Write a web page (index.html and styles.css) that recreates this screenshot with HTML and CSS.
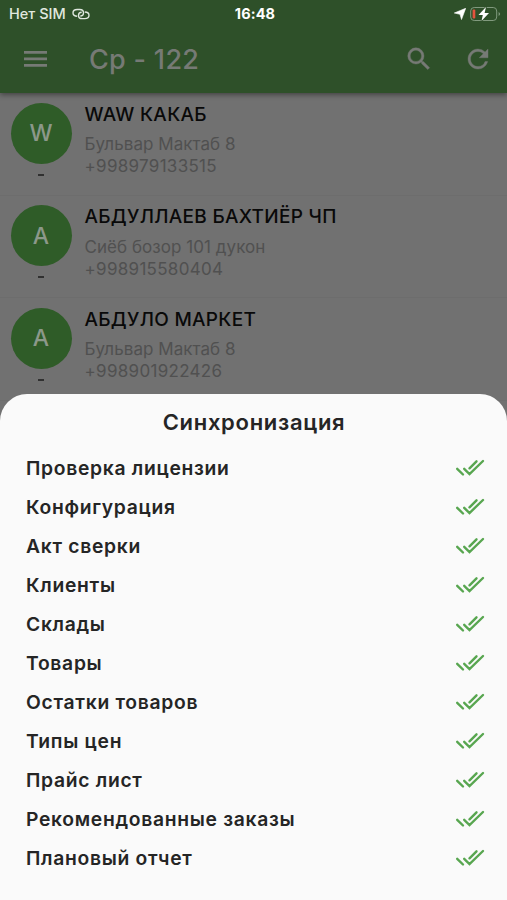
FILE: index.html
```html
<!DOCTYPE html>
<html lang="ru">
<head>
<meta charset="utf-8">
<meta name="viewport" content="width=device-width, initial-scale=1">
<title>Ср - 122</title>
<link rel="stylesheet" href="styles.css">
</head>
<body>
<svg class="defs" width="0" height="0" aria-hidden="true">
  <symbol id="checks" viewBox="0 0 30 18"><path d="M2.200 9.800l5.800 5.700M9.200 9.800l5.300 5.200L28 2M14.500 9.300l7-7" fill="none" stroke="currentColor" stroke-width="2.400" stroke-linecap="round"/></symbol>
</svg>
<div class="screen">
  <header class="top">
    <div class="status">
      <div class="carrier"><span>Нет SIM</span>
        <svg width="18" height="12" viewBox="0 0 18 12" fill="none" stroke="currentColor" stroke-width="1.400"><path d="M5.200 8.300C2.700 8.300 1 6.900 1 4.900S2.700 1.500 5.200 1.500h2.500c2.300 0 3.800 1.300 3.800 3.300S10 8 8.300 8M12.800 4c2.500 0 4.200 1.400 4.200 3.300s-1.700 3.300-4.200 3.300h-2.500c-2.300 0-3.800-1.200-3.800-3.200S8 4.300 9.700 4.300"/></svg>
      </div>
      <div class="clock">16:48</div>
      <div class="indicators">
        <svg width="12" height="12" viewBox="0 0 12 12" fill="currentColor"><path d="M11.700.3L7.500 11.500 6 6.300.3 5z" stroke="currentColor" stroke-width=".6" stroke-linejoin="round"/></svg>
        <svg width="31" height="16" viewBox="0 0 31 16"><rect x=".7" y="1.500" width="26" height="13" rx="3.500" fill="none" stroke="#819a7e"/><path d="M28.600 6v4q1.500-.8 1.500-2t-1.500-2z" fill="#819a7e"/><rect x="2.600" y="3.500" width="2.700" height="9" rx="1" fill="#e5533d"/><path d="M16 1L8.500 9h4.300L11.500 15 19 7h-4.400z" fill="#fff" stroke="#2e5029" stroke-width="1.500" paint-order="stroke"/></svg>
      </div>
    </div>
    <div class="appbar">
      <svg class="menu" width="23" height="16" viewBox="0 0 23 16" fill="currentColor"><path d="M0 0h23v2.700H0zM0 6.500h23v2.700H0zM0 13h23v2.700H0z"/></svg>
      <h1>Ср - 122</h1>
      <svg class="search" width="30" height="30" viewBox="0 0 24 24" fill="currentColor"><path d="M15.500 14h-.79l-.28-.27A6.471 6.471 0 0 0 16 9.500 6.500 6.500 0 1 0 9.500 16c1.610 0 3.090-.59 4.230-1.570l.27.28v.79l5 4.990L20.490 19l-4.990-5zm-6 0C7.010 14 5 11.990 5 9.500S7.010 5 9.500 5 14 7.010 14 9.500 11.990 14 9.500 14z" stroke="currentColor" stroke-width=".3"/></svg>
      <svg class="refresh" width="30" height="30" viewBox="0 0 24 24" fill="currentColor"><path d="M17.650 6.350A7.958 7.958 0 0 0 12 4c-4.420 0-7.990 3.580-7.990 8s3.570 8 7.990 8c3.730 0 6.840-2.550 7.730-6h-2.080A5.990 5.990 0 0 1 12 18c-3.310 0-6-2.690-6-6s2.690-6 6-6c1.660 0 3.140.69 4.220 1.780L13 11h7V4l-2.350 2.350z" stroke="currentColor" stroke-width=".3"/></svg>
    </div>
  </header>
  <main>
    <article class="client">
      <div class="side"><div class="avatar">W</div><span class="mark"></span></div>
      <div class="info"><h2>WAW КАКАБ</h2><p class="address">Бульвар Мактаб 8</p><p>+998979133515</p></div>
    </article>
    <article class="client">
      <div class="side"><div class="avatar">А</div><span class="mark"></span></div>
      <div class="info"><h2>АБДУЛЛАЕВ БАХТИЁР ЧП</h2><p class="address">Сиёб бозор 101 дукон</p><p>+998915580404</p></div>
    </article>
    <article class="client">
      <div class="side"><div class="avatar">А</div><span class="mark"></span></div>
      <div class="info"><h2>АБДУЛО МАРКЕТ</h2><p class="address">Бульвар Мактаб 8</p><p>+998901922426</p></div>
    </article>
  </main>
  <section class="sheet">
    <h2>Синхронизация</h2>
    <ul>
      <li>Проверка лицензии<svg><use href="#checks"/></svg></li>
      <li>Конфигурация<svg><use href="#checks"/></svg></li>
      <li>Акт сверки<svg><use href="#checks"/></svg></li>
      <li>Клиенты<svg><use href="#checks"/></svg></li>
      <li>Склады<svg><use href="#checks"/></svg></li>
      <li>Товары<svg><use href="#checks"/></svg></li>
      <li>Остатки товаров<svg><use href="#checks"/></svg></li>
      <li>Типы цен<svg><use href="#checks"/></svg></li>
      <li>Прайс лист<svg><use href="#checks"/></svg></li>
      <li>Рекомендованные заказы<svg><use href="#checks"/></svg></li>
      <li>Плановый отчет<svg><use href="#checks"/></svg></li>
    </ul>
  </section>
</div>
</body>
</html>
```
FILE: styles.css
```css
* { box-sizing: border-box; margin: 0; padding: 0; }
body { font-family: Inter, "Liberation Sans", sans-serif; background: #717171; }
.defs { position: absolute; }
.screen { position: relative; width: 507px; height: 900px; overflow: hidden; background: #717171; }
.top { position: relative; height: 93px; background: #2e5029; box-shadow: 0 2px 5px rgba(0, 0, 0, .4); }
.status { display: grid; grid-template-columns: 1fr auto 1fr; align-items: center; height: 27px; padding: 0 6px 0 9px; color: #fff; }
.carrier { display: flex; align-items: center; gap: 6px; color: #e0e8df; font-size: 14.5px; font-weight: 500; }
.clock { font-size: 14.5px; font-weight: 700; letter-spacing: .1px; }
.indicators { display: flex; align-items: center; justify-content: flex-end; gap: 4px; }
.appbar { display: flex; align-items: center; height: 64px; padding: 0 14px 0 24px; color: #767a75; }
.appbar h1 { margin-left: 42px; padding-top: 1px; font-size: 27px; font-weight: 500; letter-spacing: .3px; flex: 1; }
.refresh { margin-left: 29px; }
.client { display: flex; height: 102.500px; padding: 9.500px 10.500px 0; border-bottom: 1px solid #6d6d6d; }
.side { width: 61px; margin-right: 13px; display: flex; flex-direction: column; align-items: center; }
.avatar { width: 61px; height: 61px; border-radius: 50%; background: #2f5c28; color: #8c988a; font-size: 23px; font-weight: 500; display: flex; align-items: center; justify-content: center; }
.mark { width: 6px; height: 2px; margin-top: 10px; background: #303030; }
.info h2 { color: #090909; font-size: 19px; font-weight: 500; line-height: 24px; letter-spacing: .3px; margin-bottom: 6.500px; white-space: nowrap; }
.info p { color: #505050; font-size: 17px; line-height: 22px; letter-spacing: .3px; white-space: nowrap; }
.info .address { letter-spacing: .05px; }
.sheet { position: absolute; left: 0; right: 0; bottom: 0; height: 506px; padding: 14px 22px 0 26px; border-radius: 27px 27px 0 0; background: #fafafa; color: #252525; }
.sheet h2 { font-size: 22px; font-weight: 600; line-height: 28px; letter-spacing: .7px; text-align: center; margin: 0 3px 12px 0; }
.sheet ul { list-style: none; }
.sheet li { display: flex; align-items: center; justify-content: space-between; height: 39.100px; font-size: 19.300px; font-weight: 600; letter-spacing: .7px; }
.sheet svg { width: 30px; height: 18px; color: #58a650; }
```
